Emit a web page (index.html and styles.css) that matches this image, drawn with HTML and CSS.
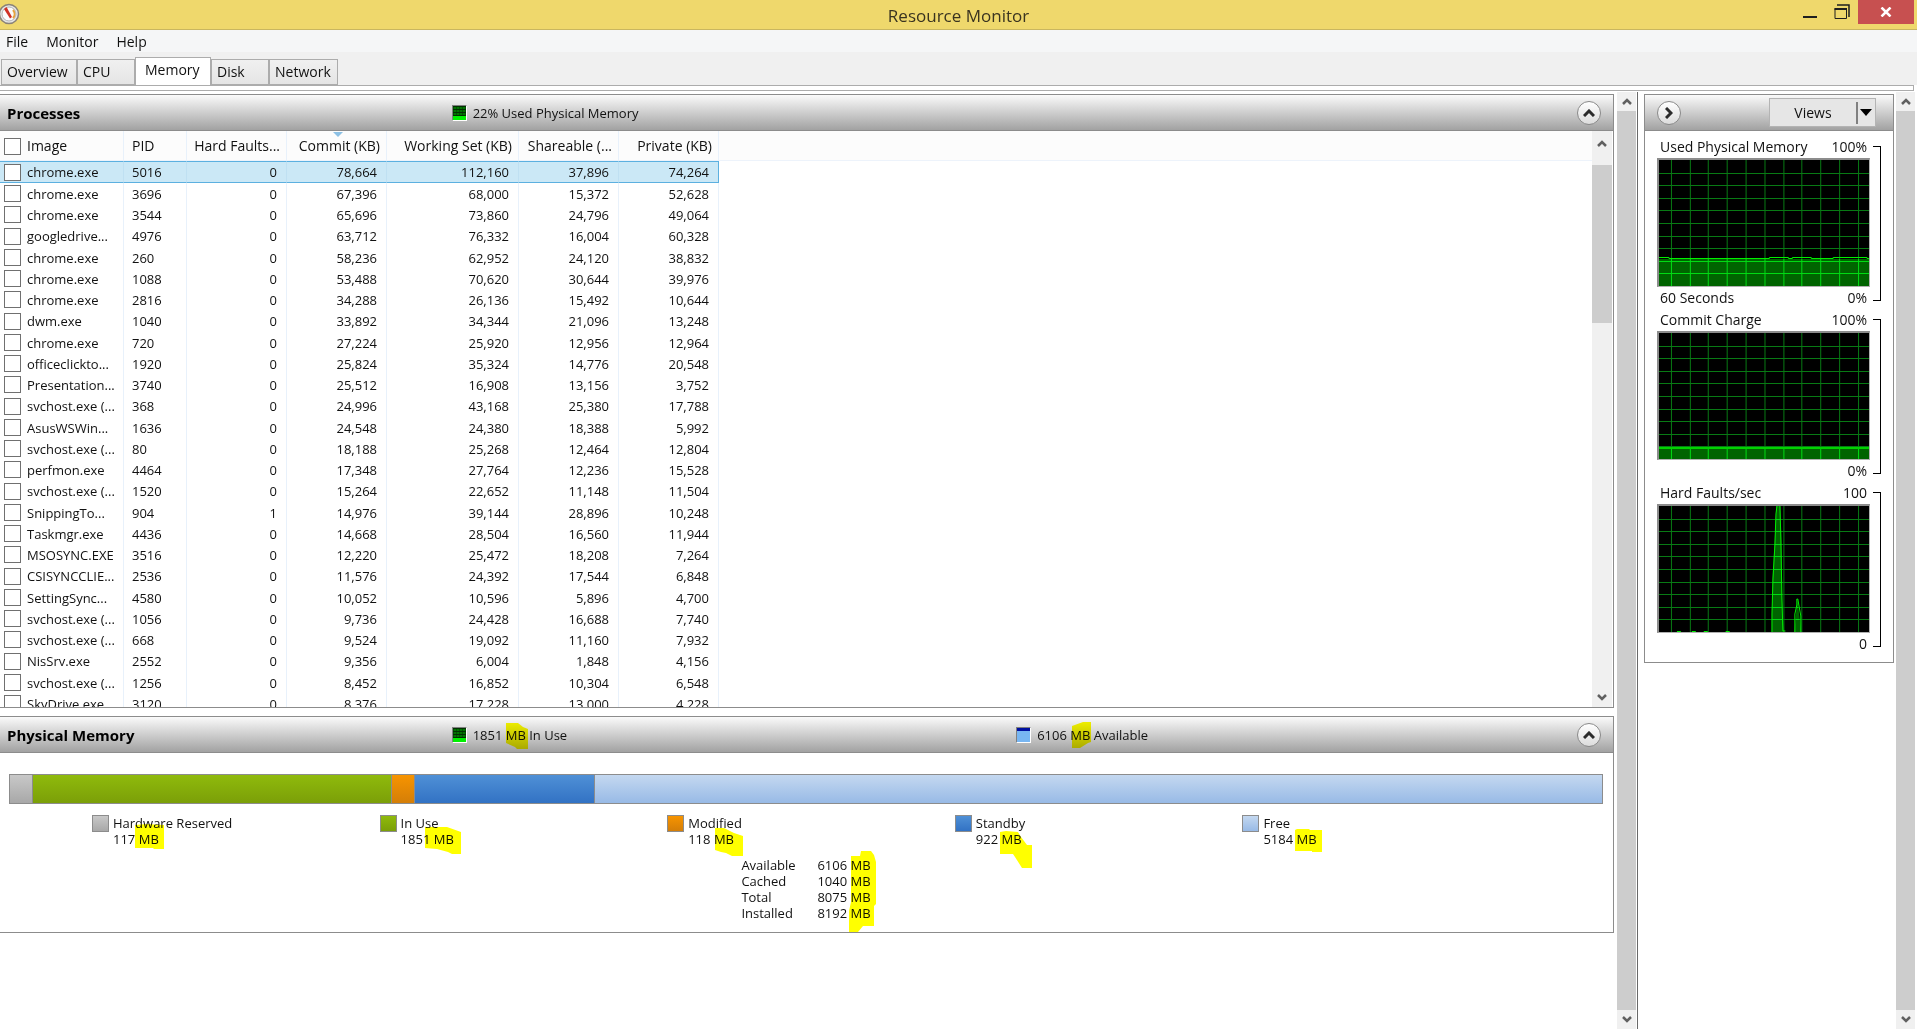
FILE: index.html
```html
<!DOCTYPE html>
<html lang="en">
<head>
  <meta charset="UTF-8" />
  <meta name="viewport" content="width=device-width, initial-scale=1.0"/>
  <title>Resource Monitor</title>
  <link rel="stylesheet" href="styles.css">
</head>
<body>
  <header class="titlebar">
    <svg class="app-icon" width="20" height="22" viewBox="0 0 20 22">
      <circle cx="9" cy="11" r="9.5" fill="#e8e8e8" stroke="#8a8378" stroke-width="1.5"/>
      <circle cx="9" cy="11" r="7" fill="#fbfbfb" stroke="#b4b4b4"/>
      <path d="M13 7a6 6 0 0 1 0 8" fill="none" stroke="#e8a33c" stroke-width="2"/>
      <path d="M4 6l2.500-2L12 14l-2 1.500z" fill="#d03024"/>
    </svg>
    <h1>Resource Monitor</h1>
    <div class="caption">
      <button type="button" class="caption-btn" aria-label="Minimize">
        <svg width="16" height="16" viewBox="0 0 16 16"><path d="M1 13h14" stroke="#1f1f1f" stroke-width="2"/></svg>
      </button>
      <button type="button" class="caption-btn" aria-label="Restore">
        <svg width="16" height="16" viewBox="0 0 16 16"><path d="M3 1h12V13" fill="none" stroke="#1f1f1f" stroke-width="1.5"/><path d="M.5 4h12.500v2H.5z" fill="#1f1f1f"/><path d="M1 4.5h11.500v10H1z" fill="none" stroke="#1f1f1f"/></svg>
      </button>
      <button type="button" class="caption-btn close" aria-label="Close">
        <svg width="12" height="10" viewBox="0 0 12 10"><path d="M1.500.5l9 9M10.500.5l-9 9" stroke="#fff" stroke-width="2.500"/></svg>
      </button>
    </div>
  </header>

  <nav class="menubar">
    <button type="button">File</button>
    <button type="button">Monitor</button>
    <button type="button">Help</button>
  </nav>

  <div class="tabs" role="tablist">
    <button type="button" role="tab" class="tab tab-wide">Overview</button>
    <button type="button" role="tab" class="tab">CPU</button>
    <button type="button" role="tab" class="tab tab-wide active" aria-selected="true">Memory</button>
    <button type="button" role="tab" class="tab">Disk</button>
    <button type="button" role="tab" class="tab tab-net">Network</button>
  </div>
  <div class="tab-edge"></div>

  <div class="workspace">
    <main class="content">
      <section class="panel">
        <div class="panel-head">
          <h2>Processes</h2>
          <p class="status"><span class="meter green"></span>22% Used Physical Memory</p>
          <button type="button" class="round" aria-label="Collapse processes">
            <svg width="12" height="8" viewBox="0 0 12 8"><path d="M1 7l5-5 5 5" fill="none" stroke="#2b2b2b" stroke-width="3"/></svg>
          </button>
        </div>
        <div class="list">
          <div class="list-body">
            <table>
              <thead>
                <tr>
                  <th class="c-image"><label><input type="checkbox">Image</label></th>
                  <th class="c-pid">PID</th>
                  <th class="c-num">Hard Faults...</th>
                  <th class="c-num sorted">Commit (KB)</th>
                  <th class="c-wide">Working Set (KB)</th>
                  <th class="c-num">Shareable (...</th>
                  <th class="c-num">Private (KB)</th>
                </tr>
              </thead>
              <tbody>
                <tr class="selected"><td><label><input type="checkbox">chrome.exe</label></td><td>5016</td><td>0</td><td>78,664</td><td>112,160</td><td>37,896</td><td>74,264</td></tr>
                <tr><td><label><input type="checkbox">chrome.exe</label></td><td>3696</td><td>0</td><td>67,396</td><td>68,000</td><td>15,372</td><td>52,628</td></tr>
                <tr><td><label><input type="checkbox">chrome.exe</label></td><td>3544</td><td>0</td><td>65,696</td><td>73,860</td><td>24,796</td><td>49,064</td></tr>
                <tr><td><label><input type="checkbox">googledrive...</label></td><td>4976</td><td>0</td><td>63,712</td><td>76,332</td><td>16,004</td><td>60,328</td></tr>
                <tr><td><label><input type="checkbox">chrome.exe</label></td><td>260</td><td>0</td><td>58,236</td><td>62,952</td><td>24,120</td><td>38,832</td></tr>
                <tr><td><label><input type="checkbox">chrome.exe</label></td><td>1088</td><td>0</td><td>53,488</td><td>70,620</td><td>30,644</td><td>39,976</td></tr>
                <tr><td><label><input type="checkbox">chrome.exe</label></td><td>2816</td><td>0</td><td>34,288</td><td>26,136</td><td>15,492</td><td>10,644</td></tr>
                <tr><td><label><input type="checkbox">dwm.exe</label></td><td>1040</td><td>0</td><td>33,892</td><td>34,344</td><td>21,096</td><td>13,248</td></tr>
                <tr><td><label><input type="checkbox">chrome.exe</label></td><td>720</td><td>0</td><td>27,224</td><td>25,920</td><td>12,956</td><td>12,964</td></tr>
                <tr><td><label><input type="checkbox">officeclickto...</label></td><td>1920</td><td>0</td><td>25,824</td><td>35,324</td><td>14,776</td><td>20,548</td></tr>
                <tr><td><label><input type="checkbox">Presentation...</label></td><td>3740</td><td>0</td><td>25,512</td><td>16,908</td><td>13,156</td><td>3,752</td></tr>
                <tr><td><label><input type="checkbox">svchost.exe (...</label></td><td>368</td><td>0</td><td>24,996</td><td>43,168</td><td>25,380</td><td>17,788</td></tr>
                <tr><td><label><input type="checkbox">AsusWSWin...</label></td><td>1636</td><td>0</td><td>24,548</td><td>24,380</td><td>18,388</td><td>5,992</td></tr>
                <tr><td><label><input type="checkbox">svchost.exe (...</label></td><td>80</td><td>0</td><td>18,188</td><td>25,268</td><td>12,464</td><td>12,804</td></tr>
                <tr><td><label><input type="checkbox">perfmon.exe</label></td><td>4464</td><td>0</td><td>17,348</td><td>27,764</td><td>12,236</td><td>15,528</td></tr>
                <tr><td><label><input type="checkbox">svchost.exe (...</label></td><td>1520</td><td>0</td><td>15,264</td><td>22,652</td><td>11,148</td><td>11,504</td></tr>
                <tr><td><label><input type="checkbox">SnippingTo...</label></td><td>904</td><td>1</td><td>14,976</td><td>39,144</td><td>28,896</td><td>10,248</td></tr>
                <tr><td><label><input type="checkbox">Taskmgr.exe</label></td><td>4436</td><td>0</td><td>14,668</td><td>28,504</td><td>16,560</td><td>11,944</td></tr>
                <tr><td><label><input type="checkbox">MSOSYNC.EXE</label></td><td>3516</td><td>0</td><td>12,220</td><td>25,472</td><td>18,208</td><td>7,264</td></tr>
                <tr><td><label><input type="checkbox">CSISYNCCLIE...</label></td><td>2536</td><td>0</td><td>11,576</td><td>24,392</td><td>17,544</td><td>6,848</td></tr>
                <tr><td><label><input type="checkbox">SettingSync...</label></td><td>4580</td><td>0</td><td>10,052</td><td>10,596</td><td>5,896</td><td>4,700</td></tr>
                <tr><td><label><input type="checkbox">svchost.exe (...</label></td><td>1056</td><td>0</td><td>9,736</td><td>24,428</td><td>16,688</td><td>7,740</td></tr>
                <tr><td><label><input type="checkbox">svchost.exe (...</label></td><td>668</td><td>0</td><td>9,524</td><td>19,092</td><td>11,160</td><td>7,932</td></tr>
                <tr><td><label><input type="checkbox">NisSrv.exe</label></td><td>2552</td><td>0</td><td>9,356</td><td>6,004</td><td>1,848</td><td>4,156</td></tr>
                <tr><td><label><input type="checkbox">svchost.exe (...</label></td><td>1256</td><td>0</td><td>8,452</td><td>16,852</td><td>10,304</td><td>6,548</td></tr>
                <tr><td><label><input type="checkbox">SkyDrive.exe</label></td><td>3120</td><td>0</td><td>8,376</td><td>17,228</td><td>13,000</td><td>4,228</td></tr>
              </tbody>
            </table>
          </div>
          <div class="scrollbar list-scroll">
            <button type="button" aria-label="Scroll list up"><svg width="10" height="7" viewBox="0 0 10 7"><path d="M1 6l4-4 4 4" fill="none" stroke="#606060" stroke-width="2.500"/></svg></button>
            <div class="thumb"></div>
            <button type="button" aria-label="Scroll list down"><svg width="10" height="7" viewBox="0 0 10 7"><path d="M1 1l4 4 4-4" fill="none" stroke="#606060" stroke-width="2.500"/></svg></button>
          </div>
        </div>
      </section>

      <section class="panel">
        <div class="panel-head">
          <h2>Physical Memory</h2>
          <p class="status"><span class="meter green"></span>1851&nbsp;<span class="unit">MB<svg class="ink" width="50" height="56"><path d="M10 10H22L27 14 32 16V36H21L19 34 10 30z"/></svg></span>&nbsp;In Use</p>
          <p class="status"><span class="meter blue"></span>6106&nbsp;<span class="unit">MB<svg class="ink" width="50" height="56"><path d="M12 13L23 9H31V29L28 30 20 35H12z"/></svg></span>&nbsp;Available</p>
          <button type="button" class="round" aria-label="Collapse physical memory">
            <svg width="12" height="8" viewBox="0 0 12 8"><path d="M1 7l5-5 5 5" fill="none" stroke="#2b2b2b" stroke-width="3"/></svg>
          </button>
        </div>
        <div class="memory">
          <!-- each part grows by its size in MB -->
          <div class="memory-bar">
            <div class="reserved" style="flex-grow: 117"></div>
            <div class="in-use" style="flex-grow: 1851"></div>
            <div class="modified" style="flex-grow: 118"></div>
            <div class="standby" style="flex-grow: 922"></div>
            <div class="free" style="flex-grow: 5184"></div>
          </div>
          <ul class="legend">
            <li><span class="swatch reserved"></span><div>Hardware Reserved<br>117 <span class="unit">MB<svg class="ink" width="50" height="56"><path d="M6 9L17 8 35 9V33H25L24 32H6z"/></svg></span></div></li>
            <li><span class="swatch in-use"></span><div>In Use<br>1851 <span class="unit">MB<svg class="ink" width="50" height="56"><path d="M1 11H23L37 16V38H28L24 36 13 33 1 32z"/></svg></span></div></li>
            <li><span class="swatch modified"></span><div>Modified<br>118 <span class="unit">MB<svg class="ink" width="50" height="56"><path d="M11 12H20L30 17 39 20V40H28L22 37 17 36 11 34z"/></svg></span></div></li>
            <li><span class="swatch standby"></span><div>Standby<br>922 <span class="unit">MB<svg class="ink" width="50" height="56"><path d="M9 16L15 15 27 16 30 21 36 29H41V52H31L24 41 22 38H9z"/></svg></span></div></li>
            <li><span class="swatch free"></span><div>Free<br>5184 <span class="unit">MB<svg class="ink" width="50" height="56"><path d="M8 14L10 13H22L23 14H35V36H25V35H8z"/></svg></span></div></li>
          </ul>
          <dl class="totals">
            <dt>Available</dt><dd>6106 <span class="unit">MB<svg class="ink" width="50" height="100"><path d="M10 14H19L20 9H30L33 13 35 20V62L33 64V84H22L17 90H8V69L10 60z"/></svg></span></dd>
            <dt>Cached</dt><dd>1040 MB</dd>
            <dt>Total</dt><dd>8075 MB</dd>
            <dt>Installed</dt><dd>8192 MB</dd>
          </dl>
        </div>
      </section>
    </main>

    <div class="scrollbar">
      <button type="button" aria-label="Scroll up"><svg width="10" height="7" viewBox="0 0 10 7"><path d="M1 6l4-4 4 4" fill="none" stroke="#606060" stroke-width="2.500"/></svg></button>
      <div class="thumb"></div>
      <button type="button" aria-label="Scroll down"><svg width="10" height="7" viewBox="0 0 10 7"><path d="M1 1l4 4 4-4" fill="none" stroke="#606060" stroke-width="2.500"/></svg></button>
    </div>

    <aside class="sidebar">
      <section class="panel graphs">
        <div class="graphs-head">
          <button type="button" class="round" aria-label="Hide graphs">
            <svg width="8" height="12" viewBox="0 0 8 12"><path d="M1 1l5 5-5 5" fill="none" stroke="#2b2b2b" stroke-width="3"/></svg>
          </button>
          <button type="button" class="views">
            <span>Views</span>
            <svg width="12" height="7" viewBox="0 0 12 7"><path d="M0 0h12L6 7z"/></svg>
          </button>
        </div>

        <div class="graph">
          <div class="graph-label"><span>Used Physical Memory</span><span>100%</span></div>
          <svg class="plot" viewBox="0 0 211 126" preserveAspectRatio="none">
            <defs>
              <path id="grid" d="M12.500 0v126M31.500 0v126M49.500 0v126M68.500 0v126M87.500 0v126M106.500 0v126M125.500 0v126M143.500 0v126M162.500 0v126M181.500 0v126M200.500 0v126M0 13.500h211M0 25.500h211M0 38.500h211M0 50.500h211M0 63.500h211M0 76.500h211M0 88.500h211M0 101.500h211M0 113.500h211"/>
              <clipPath id="used"><path d="M0 99h211v27H0z"/></clipPath>
              <clipPath id="commit"><path d="M0 115h211v11H0z"/></clipPath>
              <clipPath id="faults"><path d="M113 126L114 73 116 38 118 0H122L123 34 124 93 125 126zM136 126L139 93 143 126z"/></clipPath>
            </defs>
            <use href="#grid" class="grid"/>
            <g clip-path="url(#used)"><path class="area" d="M0 99h211v27H0z"/><use href="#grid" class="grid-lit"/></g>
            <path class="line" d="M0 97.500H10V98.500H111V97.500H130V98.500H134V97.500H153V98.500H175V97.500H209V98.500H211"/>
          </svg>
          <div class="graph-label"><span>60 Seconds</span><span>0%</span></div>
          <span class="bracket"></span>
        </div>

        <div class="graph">
          <div class="graph-label"><span>Commit Charge</span><span>100%</span></div>
          <svg class="plot" viewBox="0 0 211 126" preserveAspectRatio="none">
            <use href="#grid" class="grid"/>
            <g clip-path="url(#commit)"><path class="area" d="M0 115h211v11H0z"/><use href="#grid" class="grid-lit"/></g>
            <path class="line commit" d="M0 115H211"/>
          </svg>
          <div class="graph-label"><span></span><span>0%</span></div>
          <span class="bracket"></span>
        </div>

        <div class="graph">
          <div class="graph-label"><span>Hard Faults/sec</span><span>100</span></div>
          <svg class="plot" viewBox="0 0 211 126" preserveAspectRatio="none">
            <use href="#grid" class="grid"/>
            <g clip-path="url(#faults)"><path class="area" d="M0 0h211v126H0z"/><use href="#grid" class="grid-lit"/></g>
            <path class="line" d="M18 125.500h4M33 125.500h4M45 125.500h4M67 125.500h4M113.500 126V108L114.500 73 116.500 38 117.500 8 118.500 0M121.500 0L122.500 34 123.500 93 124.500 125H127M136.500 126V108L138.500 99V93H139.500L140.500 99 142.500 110V126"/>
          </svg>
          <div class="graph-label"><span></span><span>0</span></div>
          <span class="bracket"></span>
        </div>
      </section>
    </aside>

    <div class="scrollbar outer">
      <button type="button" aria-label="Scroll graphs up"><svg width="10" height="7" viewBox="0 0 10 7"><path d="M1 6l4-4 4 4" fill="none" stroke="#606060" stroke-width="2.500"/></svg></button>
      <div class="thumb"></div>
      <button type="button" aria-label="Scroll graphs down"><svg width="10" height="7" viewBox="0 0 10 7"><path d="M1 1l4 4 4-4" fill="none" stroke="#606060" stroke-width="2.500"/></svg></button>
    </div>
  </div>
</body>
</html>
```

FILE: styles.css
```css
* {
  box-sizing: border-box;
}

body {
  margin: 0;
  height: 100vh;
  display: flex;
  flex-direction: column;
  overflow: hidden;
  background: #fff;
  color: #111;
  font-family: "Open Sans", "Noto Sans", sans-serif;
  font-size: 13px;
  line-height: 16px;
}

button {
  margin: 0;
  padding: 0;
  border: none;
  background: none;
  color: inherit;
  font: inherit;
}

h1, h2, p, ul, dl, dd {
  margin: 0;
  padding: 0;
}

svg {
  display: block;
}

/* title bar */
.titlebar {
  display: grid;
  grid-template-columns: 1fr auto 1fr;
  height: 30px;
  background: #efd86c;
  border-bottom: 1px solid #c9b65f;
}

.app-icon {
  margin-top: 3px;
}

.titlebar h1 {
  font-size: 17px;
  font-weight: 400;
  line-height: 32px;
  color: #3a3420;
}

.caption {
  display: flex;
  justify-content: flex-end;
  padding-right: 3px;
}

.caption-btn {
  display: flex;
  justify-content: center;
  align-items: center;
  width: 32px;
  height: 24px;
}

.close {
  width: 56px;
  background: #c75050;
}

/* menu */
.menubar {
  display: flex;
  gap: 18px;
  height: 22px;
  padding: 1px 0 0 6px;
  background: #f5f6f7;
  font-size: 14px;
}

/* tabs */
.tabs {
  display: flex;
  align-items: flex-end;
  height: 33px;
  padding-left: 1px;
  background: #f0f0f0;
}

.tab {
  width: 58px;
  height: 26px;
  padding: 0 5px;
  border: 1px solid #acacac;
  background: linear-gradient(#f0f0f0, #e5e5e5);
  font-size: 14px;
  text-align: left;
}

.tab-wide {
  width: 76px;
}

.tab-net {
  width: 69px;
}

.tab.active {
  height: 28px;
  padding: 0 9px 4px;
  border-bottom: none;
  background: #fff;
}

.tab-edge {
  height: 6px;
  margin-right: 3px;
  border: 1px solid #acacac;
  border-left: none;
}

/* work area */
.workspace {
  flex: 1;
  display: flex;
  min-height: 0;
  padding-top: 1px;
}

.content {
  flex: 1;
  min-width: 0;
  padding: 2px 3px 0 0;
}

.panel {
  margin-bottom: 8px;
  border: 1px solid #8c8c8c;
  border-left: none;
}

.panel-head,
.graphs-head {
  height: 36px;
  background: linear-gradient(#fafafa, #a2a2a2);
  border-bottom: 1px solid #8c8c8c;
}

.panel-head {
  display: grid;
  grid-template-columns: 28% 35% 1fr auto;
  align-items: center;
}

.panel-head .round {
  grid-column: 4;
  margin-right: 12px;
}

.panel-head h2 {
  padding-left: 7px;
  font-size: 15px;
  font-weight: 700;
  color: #000;
}

.status {
  display: flex;
  align-items: center;
}

.meter {
  width: 15px;
  height: 16px;
  margin-right: 6px;
  border: 1px solid #808080;
  border-right-color: #fff;
  border-bottom-color: #fff;
}

.green {
  background:
    linear-gradient(transparent 10px, #00f000 10px),
    repeating-linear-gradient(90deg, #00300080 0 1px, transparent 1px 3px),
    repeating-linear-gradient(#003000 0 1px, #007400 1px 3px);
}

.blue {
  background: linear-gradient(#0010a0 3px, #78b6f2 3px);
}

.round {
  display: flex;
  justify-content: center;
  align-items: center;
  width: 24px;
  height: 24px;
  border: 1px solid #8a8a8a;
  border-radius: 50%;
  background: linear-gradient(#fff, #dcdcdc);
}

/* process list */
.list {
  display: flex;
  height: 56vh;
}

.list-body {
  flex: 1;
  overflow: hidden;
  background: linear-gradient(#fcfcfc 29px, #edf3fb 29px 30px, #fff 30px);
}

table {
  width: 719px;
  table-layout: fixed;
  border-collapse: separate;
  border-spacing: 0;
}

th,
td {
  height: 21px;
  padding: 0 9px 0 0;
  border-right: 1px solid #e8f1fb;
  font-weight: 400;
  text-align: right;
  white-space: nowrap;
}

/* the list pitch is a little over 21px */
tr:nth-child(4n) td {
  height: 22px;
}

th {
  position: relative;
  height: 30px;
  padding-right: 6px;
  font-size: 14px;
}

th:nth-child(-n+2),
td:nth-child(-n+2) {
  padding: 0 0 0 8px;
  text-align: left;
}

th:first-child,
td:first-child {
  padding-left: 4px;
}

.c-image { width: 124px; }
.c-pid { width: 63px; }
.c-num { width: 100px; }
.c-wide { width: 132px; }

.sorted::before {
  content: "";
  position: absolute;
  top: 1px;
  left: 46%;
  border: 5px solid transparent;
  border-top-color: #8cc0e4;
  border-bottom: none;
}

label {
  display: flex;
  align-items: center;
  gap: 6px;
}

input[type="checkbox"] {
  appearance: none;
  width: 17px;
  height: 17px;
  margin: 0;
  border: 1px solid #707070;
  background: #fff;
}

.selected td {
  height: 22px;
  background: #cbe8f6;
  border-top: 1px solid #5cb0e0;
  border-bottom: 1px solid #5cb0e0;
  border-right-color: #bfe0f2;
}

.selected td:last-child {
  border-right-color: #5cb0e0;
}

/* scroll bars */
.scrollbar {
  display: flex;
  flex-direction: column;
  width: 19px;
  background: #f0f0f0;
}

.scrollbar button {
  display: flex;
  justify-content: center;
  align-items: center;
  height: 19px;
}

.thumb {
  flex: 1;
  background: #cdcdcd;
}

.list-scroll {
  width: 20px;
  margin-right: 1px;
}

.list-scroll button {
  height: 24px;
}

.list-scroll button:first-child {
  margin-bottom: 10px;
}

.list-scroll .thumb {
  flex: none;
  height: 158px;
}

.list-scroll button:last-child {
  height: 20px;
  margin-top: auto;
}

.outer {
  margin-right: 2px;
}

/* memory usage */
.memory {
  padding: 21px 10px 11px 9px;
}

.memory-bar {
  display: flex;
  height: 30px;
  border: 1px solid #8c8c8c;
}

.memory-bar div {
  flex-basis: 0;
}

.memory-bar div + div {
  box-shadow: -1px 0 #8c8c8c;
}

.reserved { background: linear-gradient(#c8c8c8, #a8a8a8); }
.in-use { background: linear-gradient(#8fba0c, #7b9f08); }
.modified { background: linear-gradient(#f79400, #d47e08); }
.standby { background: linear-gradient(#4f90d6, #3272c4); }
.free { background: linear-gradient(#c4d8f0, #98bae6); }

.legend {
  display: grid;
  grid-template-columns: repeat(5, 1fr);
  margin: 11px 73px 0 83px;
  list-style: none;
}

.legend li {
  display: flex;
  gap: 4px;
}

.swatch {
  width: 17px;
  height: 17px;
  border: 1px solid #8c8c8c;
}

.totals {
  display: grid;
  grid-template-columns: 76px auto;
  justify-content: center;
  margin-top: 10px;
}

/* highlighter strokes over the units */
.unit {
  position: relative;
}

.ink {
  position: absolute;
  top: -14px;
  left: -10px;
  fill: #ff0;
  mix-blend-mode: multiply;
  pointer-events: none;
}

/* graphs */
.sidebar {
  margin-left: 1px;
  padding: 2px 2px 0 6px;
  border-left: 1px solid #696969;
}

.graphs {
  width: 250px;
  padding-bottom: 7px;
  border-left: 1px solid #8c8c8c;
}

.graphs-head {
  display: flex;
  justify-content: space-between;
  align-items: center;
  margin-bottom: 5px;
  padding: 0 17px 0 12px;
}

.views {
  display: flex;
  align-items: center;
  width: 107px;
  height: 29px;
  padding-right: 3px;
  border: 1px solid #b4b4b4;
  background: #e6e6e6;
  font-size: 14px;
}

.views span {
  flex: 1;
  margin-right: 2px;
  border-right: 2px solid #808080;
  line-height: 22px;
}

.graph {
  display: grid;
  grid-template-columns: 1fr 8px;
  column-gap: 3px;
  padding: 0 12px;
}

.graph-label {
  display: flex;
  justify-content: space-between;
  height: 22px;
  padding: 0 3px;
  font-size: 14px;
  line-height: 22px;
}

.plot {
  grid-column: 1;
  width: 100%;
  height: 129px;
  border: 1px solid #b0b0b0;
  border-top: 2px solid #8c8c8c;
  border-left: 2px solid #8c8c8c;
  background: #000;
  shape-rendering: crispEdges;
}

.bracket {
  grid-column: 2;
  grid-row: 1 / 4;
  margin: 10px 0 8px;
  border: 1px solid #000;
  border-left: none;
}

.grid { fill: none; stroke: #087a14; }
.grid-lit { fill: none; stroke: #00dc14; }
.area { fill: #006400; }
.line { fill: none; stroke: #00f000; }
.commit { stroke: #00d200; stroke-width: 2; }
```
